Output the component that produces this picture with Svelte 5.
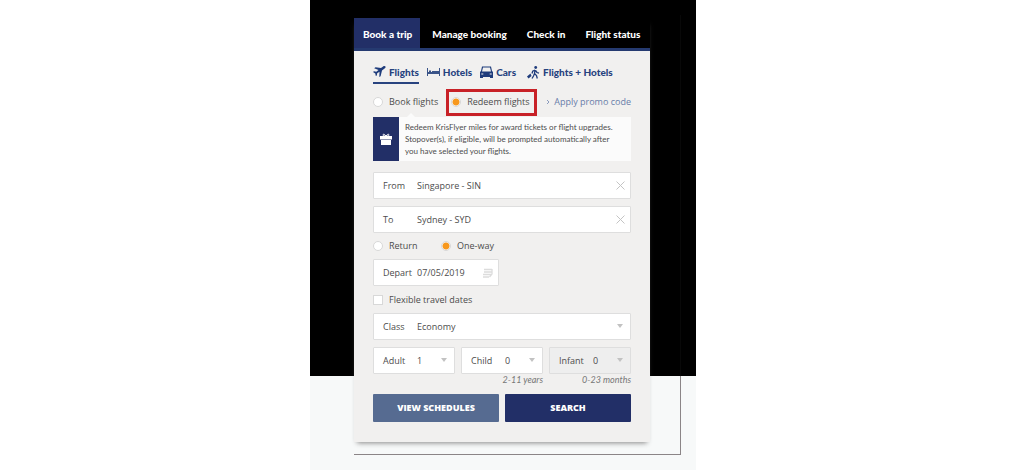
<script>
  const tabs = ['Book a trip', 'Manage booking', 'Check in', 'Flight status'];
  let trip = $state('redeem');
  let direction = $state('oneway');
  let from = $state('Singapore - SIN');
  let to = $state('Sydney - SYD');
  let depart = $state('07/05/2019');
  let flexible = $state(false);
</script>

{#snippet clear(name, onclear)}
  <button class="clear" type="button" aria-label={name} onclick={onclear}>
    <svg width="9" height="9" viewBox="0 0 9 9"><path d="M.5.5l8 8M8.500.5l-8 8" stroke="#c4c4c4" fill="none" /></svg>
  </button>
{/snippet}

{#snippet arrow()}
  <svg class="arrow" width="6" height="4" viewBox="0 0 6 4"><path d="M0 0h6L3 4z" fill="#c2c2c2" /></svg>
{/snippet}

<div class="page">
  <main class="stage">
    <div class="frame">
      <section class="card">
        <nav class="tabs">
          {#each tabs as tab, i}
            <button type="button" class:active={i === 0}>{tab}</button>
          {/each}
        </nav>
        <form class="body" onsubmit={(e) => e.preventDefault()}>
          <nav class="kinds">
            <a class="current" href="#flights">
              <svg width="13" height="12" viewBox="0 0 13 12" fill="#1f3c7c"><path d="M12.600.8c-.4-.9-1.600-.9-2.500-.3L8 2 2.500 1.300l-1.300.9 4.300 1.700L3.300 5.700 1 5.200l-1 .7 2.300 1.500.5 2.700 1-.6.4-2.200 2.300-1.500-.2 5.200 1.300-.8L9 4.500 11.600 2.500c.8-.6 1.200-1.100 1-1.700z" /></svg>Flights</a>
            <a href="#hotels">
              <svg width="13" height="8" viewBox="0 0 13 8" fill="#3a5488"><path d="M0 0h1v8H0zM12 0h1v8h-1zM1 4h11v2H1zM2 2.500h2V4H2zM5 3h7v1H5z" /></svg>Hotels</a>
            <a href="#cars">
              <svg width="13" height="12" viewBox="0 0 13 12" fill="#1f3c7c"><path fill-rule="evenodd" d="M2 .5h9l1 4.500 1 1v6h-3v-1H3v1H0V6l1-1zM3 1.500L2 5.500h9l-1-4zM1.300 7.500v1h2v-1zm8.400 0v1h2v-1z" /></svg>Cars</a>
            <a class="packages" href="#packages">
              <svg width="13" height="13" viewBox="0 0 13 13"><circle cx="8.700" cy="1.500" r="1.400" fill="#1f3c7c" /><path d="M8 4L7.500 7.500 9.500 9.500l.8 3M7.500 7.500L6.500 10l-1.500 2.500M8 4L5.700 5.300 5 7.500M8.500 4.500l1.500 2 2 .7" fill="none" stroke="#1f3c7c" stroke-width="1.300" /><path d="M3.500 7.500l1 2.500-3 2.500L0 10.500z" fill="#1f3c7c" /></svg>Flights + Hotels</a>
          </nav>

          <div class="modes">
            <label class="choice"><input type="radio" name="trip" value="book" bind:group={trip} />Book flights</label>
            <label class="choice marked"><input type="radio" name="trip" value="redeem" bind:group={trip} />Redeem flights</label>
            <a class="promo" href="#promo"><svg width="4" height="6" viewBox="0 0 4 6"><path d="M1 1l2 2-2 2" fill="none" stroke="#8b9bbd" /></svg>Apply promo code</a>
          </div>

          <div class="notice">
            <div class="badge">
              <svg width="12" height="12" viewBox="0 0 12 12" fill="#fff"><path d="M0 3h12v3.500H0zM1 7h10v5H1z" /><path d="M6 3C4.500.800 3 .800 3 2s1.500 1 3 1 3 .200 3-1-1.500-1.200-3 1z" fill="none" stroke="#fff" /></svg>
            </div>
            <p>Redeem KrisFlyer miles for award tickets or flight upgrades. Stopover(s), if eligible, will be prompted automatically after you have selected your flights.</p>
          </div>

          <div class="fields">
            <div class="field"><label for="from">From</label><input id="from" type="text" bind:value={from} />{@render clear('Clear origin', () => (from = ''))}</div>
            <div class="field"><label for="to">To</label><input id="to" type="text" bind:value={to} />{@render clear('Clear destination', () => (to = ''))}</div>
          </div>

          <div class="directions">
            <label class="choice"><input type="radio" name="direction" value="return" bind:group={direction} />Return</label>
            <label class="choice"><input type="radio" name="direction" value="oneway" bind:group={direction} />One-way</label>
          </div>

          <div class="pair">
            <div class="field"><label for="depart">Depart</label><input id="depart" type="text" bind:value={depart} />
              <svg class="calendar" width="10" height="10" viewBox="0 0 10 10"><path d="M1 1.500h8M1 4h8M0 6.500h8M0 9h6M9 1v5L6.500 9" fill="none" stroke="#dcdcdc" stroke-width="1.300" /></svg>
            </div>
          </div>

          <label class="choice flexible"><input type="checkbox" bind:checked={flexible} />Flexible travel dates</label>

          <div class="field"><label for="class">Class</label><select id="class"><option>Economy</option><option>Business</option></select>{@render arrow()}</div>

          <div class="people">
            <div class="person">
              <div class="field"><label for="adult">Adult</label><select id="adult"><option>1</option><option>2</option></select>{@render arrow()}</div>
            </div>
            <div class="person">
              <div class="field"><label for="child">Child</label><select id="child"><option>0</option><option>1</option></select>{@render arrow()}</div>
              <small>2-11 years</small>
            </div>
            <div class="person">
              <div class="field off"><label for="infant">Infant</label><select id="infant" disabled><option>0</option></select>{@render arrow()}</div>
              <small>0-23 months</small>
            </div>
          </div>

          <div class="pair actions">
            <button type="button" class="schedules">VIEW SCHEDULES</button>
            <button type="submit" class="search">SEARCH</button>
          </div>
        </form>
      </section>
    </div>
  </main>
</div>

<style>
  :global(body) { margin: 0; background: #fff; }
  .page, .page :global(*) { box-sizing: border-box; }
  .page {
    display: grid;
    grid-template-columns: 310fr minmax(386px, 386fr) 314fr;
    font: 9px/12px "Open Sans", sans-serif;
    color: #4c4c4c;
  }
  button, input, select { font: inherit; color: inherit; margin: 0; padding: 0; border: 0; background: none; }
  button { cursor: pointer; }
  a { color: inherit; text-decoration: none; }
  svg { flex: none; display: block; }
  .stage {
    grid-column: 2;
    padding: 15px 15px 15px 44px;
    background: linear-gradient(#000 376px, #f7f9f9 376px);
  }
  .frame {
    padding: 3px 30px 12px 0;
    border: solid;
    border-width: 0 1px 1px 0;
    border-image: linear-gradient(#080808 361px, #8b8587 361px) 1;
  }
  .card { background: #f1f0ef; box-shadow: 0 4px 5px -3px #888; }
  .tabs, .kinds { font-family: Lato, sans-serif; font-size: 10px; font-weight: 900; white-space: nowrap; }
  .tabs { display: flex; gap: 3px; background: #000; border-bottom: 3px solid #253a70; }
  .tabs button { height: 30px; padding: 2px 8px 0 9px; color: #fff; }
  .tabs .active { background: #222f67; }
  .body { padding: 14px 19px 20px; }
  .kinds { display: flex; gap: 8px; color: #28437f; }
  .kinds a { display: flex; align-items: center; gap: 3px; height: 19px; padding-bottom: 3px; border-bottom: 2px solid transparent; }
  .kinds .current { border-color: #28437f; }
  .kinds .packages { margin-left: 3px; }
  .modes { display: flex; align-items: center; height: 27px; margin-top: 5px; white-space: nowrap; }
  .choice { display: flex; align-items: center; gap: 6px; }
  .choice input { appearance: none; flex: none; width: 10px; height: 10px; border: 1px solid #d8d8d8; background: #fff; }
  .choice input[type="radio"] { border-radius: 50%; }
  .choice input[type="radio"]:checked { background: radial-gradient(circle, #f7981d 3px, #fff 4px); }
  .choice input[type="checkbox"]:checked { background: #f7981d; }
  .modes .choice, .promo { height: 27px; padding-bottom: 2px; }
  .modes .marked { margin-left: 8px; padding: 0 4px 2px 2px; border: 3px solid #c82127; }
  .promo { display: flex; align-items: center; gap: 4px; margin-left: auto; color: #687da9; }
  .notice { position: relative; display: flex; margin-top: 1px; background: #fbfbfb; font-size: 8px; }
  .notice::before { content: ""; position: absolute; left: 34px; top: -4px; border: solid transparent; border-width: 0 4px 4px; border-bottom-color: #fbfbfb; }
  .badge { display: flex; align-items: center; justify-content: center; width: 26px; background: #222f67; }
  .notice p { flex: 1; margin: 0; padding: 4px 8px 4px 6px; font-family: Lato, sans-serif; }
  .fields { display: grid; gap: 7px; margin-top: 11px; }
  .field { display: flex; align-items: center; height: 27px; padding: 0 5px 0 9px; border: 1px solid #dedede; border-radius: 1px; background: #fff; }
  .field label { flex: none; width: 34px; }
  .field input, .field select { flex: 1; min-width: 0; width: 0; height: 20px; appearance: none; outline: 0; opacity: 1; }
  .off { background: #eee; }
  .arrow { margin-right: 2px; margin-bottom: 2px; pointer-events: none; }
  .directions { display: grid; grid-template-columns: 68px 1fr; height: 26px; }
  .pair { display: grid; grid-template-columns: 1fr 1fr; gap: 6px; }
  .flexible { height: 27px; }
  .people { display: grid; grid-template-columns: repeat(3, 1fr); gap: 6px; margin-top: 7px; }
  small { display: block; text-align: right; font-family: Lato, sans-serif; font-size: 9px; font-style: italic; color: #777; }
  .actions { margin-top: 8px; }
  .actions button { height: 28px; border-radius: 1px; color: #fff; font-weight: 800; }
  .schedules { background: #566b91; }
  .search { background: #222f67; }
</style>
